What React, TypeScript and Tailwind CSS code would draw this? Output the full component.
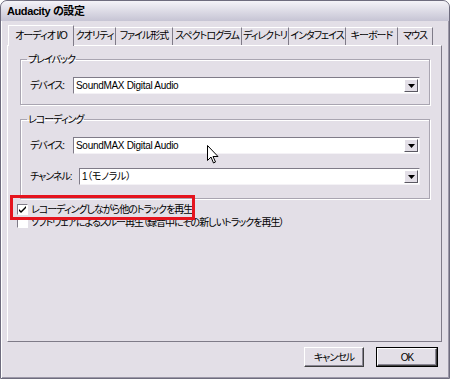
import React from 'react';

const FONT = "font-['Liberation_Sans','Noto_Sans_CJK_JP',sans-serif] [font-feature-settings:'palt']";
const BG = 'bg-[#e3dfe7]';
const JP = 'text-[10px] leading-[13px] tracking-[-1px] text-black whitespace-nowrap';

const TABS: { label: string; w: string }[] = [
  { label: 'オーディオ I/O', w: 'w-[66px]' },
  { label: 'クオリティ', w: 'w-[42px]' },
  { label: 'ファイル形式', w: 'w-[57px]' },
  { label: 'スペクトログラム', w: 'w-[69px]' },
  { label: 'ディレクトリ', w: 'w-[47px]' },
  { label: 'インタフェイス', w: 'w-[57px]' },
  { label: 'キーボード', w: 'w-[52px]' },
  { label: 'マウス', w: 'w-[35px]' },
];

function Dropdown({ value, className = '' }: { value: string; className?: string }) {
  return (
    <div
      className={`flex h-[17px] items-center border border-t-[#7f7b88] border-l-[#7f7b88] border-b-[#f4f2f6] border-r-[#f4f2f6] bg-white ${className}`}
    >
      <span className="flex-1 whitespace-nowrap pl-[2px] text-[10px] leading-none tracking-[-0.3px] text-black">{value}</span>
      <div
        className={`mr-[1px] flex h-[13px] w-[14px] items-center justify-center border border-t-white border-l-white border-r-[#5a5862] border-b-[#5a5862] ${BG}`}
      >
        <svg width="7" height="4" viewBox="0 0 7 4">
          <path d="M0 0h7L3.5 4z" fill="#000" />
        </svg>
      </div>
    </div>
  );
}

function Group({ label, className = '', children }: { label: string; className?: string; children: React.ReactNode }) {
  return (
    <fieldset
      className={`ml-[12px] w-[410px] border border-[#a9a5b1] shadow-[inset_1px_1px_0_#fff,1px_1px_0_#fff] ${className}`}
    >
      <legend className={`ml-[6px] px-[1px] ${JP}`}>{label}</legend>
      {children}
    </fieldset>
  );
}

function Row({ label, labelW, children }: { label: string; labelW: string; children: React.ReactNode }) {
  return (
    <div className="flex items-center pl-[9px]">
      <span className={`${labelW} ${JP}`}>{label}</span>
      {children}
    </div>
  );
}

function Check({ checked, label }: { checked: boolean; label: string }) {
  return (
    <div className="flex h-[13px] items-center pl-[9px]">
      <div className="flex h-[11px] w-[11px] items-center justify-center border border-t-[#7f7b88] border-l-[#7f7b88] border-b-white border-r-white bg-white">
        {checked && (
          <svg width="7" height="7" viewBox="0 0 7 7">
            <path d="M0 3l2 2 5-5v2l-5 5-2-2z" fill="#000" />
          </svg>
        )}
      </div>
      <span className={`ml-[3px] ${JP}`}>{label}</span>
    </div>
  );
}

function Button({ label, def = false }: { label: string; def?: boolean }) {
  return (
    <div className={`h-[20px] ${def ? 'w-[62px] border border-black' : 'w-[60px]'}`}>
      <div className="flex h-full w-full items-center justify-center border border-t-white border-l-white border-r-[#404040] border-b-[#404040] shadow-[inset_-1px_-1px_0_#8a8694]">
        <span className={JP}>{label}</span>
      </div>
    </div>
  );
}

export default function App() {
  return (
    <div className={`relative flex h-[379px] w-[450px] flex-col overflow-hidden rounded-t-[7px] border border-[#6e6c7e] ${BG} ${FONT}`}>
      {/* title bar */}
      <div className="flex h-[20px] items-center rounded-t-[6px] bg-gradient-to-b from-[#f4f3f8] to-[#c6c4d4] pl-[6px]">
        <span className="text-[11px] font-bold leading-none tracking-[-0.4px] text-black">Audacity の設定</span>
      </div>

      <div className="flex flex-1 flex-col pl-[6px] pr-[7px] pt-[4px] shadow-[inset_1px_0_0_#fff,inset_-1px_0_0_#9c98a8,inset_0_-1px_0_#9c98a8]">
        {/* tabs */}
        <div className="flex h-[20px] items-end pl-[1px]">
          {TABS.map((t, i) =>
            i === 0 ? (
              <div
                key={t.label}
                className={`relative z-10 -mb-px flex h-[21px] ${t.w} items-start justify-center border-l border-t border-r border-l-white border-t-white border-r-[#7f7b88] pt-[3px] ${BG}`}
              >
                <span className={JP}>{t.label}</span>
              </div>
            ) : (
              <div
                key={t.label}
                className={`flex h-[18px] ${t.w} items-start justify-center border-t border-r border-t-white border-r-[#7f7b88] pt-[1px]`}
              >
                <span className={JP}>{t.label}</span>
              </div>
            ),
          )}
        </div>

        {/* tab panel */}
        <div className="flex h-[297px] w-[435px] flex-col border border-t-white border-l-white border-r-[#7f7b88] border-b-[#7f7b88]">
          <Group label="プレイバック" className="mt-[7px] pb-[10px] pt-[11px]">
            <Row label="デバイス:" labelW="w-[43px]">
              <Dropdown value="SoundMAX Digital Audio" className="w-[347px]" />
            </Row>
          </Group>

          <Group label="レコーディング" className="mt-[8px] pb-[13px] pt-[11px]">
            <Row label="デバイス:" labelW="w-[43px]">
              <Dropdown value="SoundMAX Digital Audio" className="w-[347px]" />
            </Row>
            <div className="h-[14px]" />
            <Row label="チャンネル:" labelW="w-[49px]">
              <Dropdown value="1（モノラル）" className="w-[341px]" />
            </Row>
          </Group>

          <div className="mt-[4px] flex flex-col">
            <Check checked label="レコーディングしながら他のトラックを再生" />
            <Check checked={false} label="ソフトウェアによるスルー再生（録音中にその新しいトラックを再生）" />
          </div>
        </div>

        {/* buttons */}
        <div className="mt-[5px] flex w-[435px] justify-end gap-[12px] pr-[4px]">
          <Button label="キャンセル" />
          <Button label="OK" def />
        </div>
      </div>

      {/* annotation */}
      <div className="pointer-events-none absolute left-[9px] top-[194px] h-[25px] w-[185px] border-[3px] border-[#e5141e]" />

      {/* mouse cursor */}
      <svg className="pointer-events-none absolute left-[206px] top-[144px]" width="13" height="20" viewBox="0 0 13 20">
        <path d="M0.5 0.5v15l3.5-3.5 2.5 6 2-1-2.5-5.5h5z" fill="#fff" stroke="#000" strokeWidth="1" strokeLinejoin="miter" />
      </svg>
    </div>
  );
}
